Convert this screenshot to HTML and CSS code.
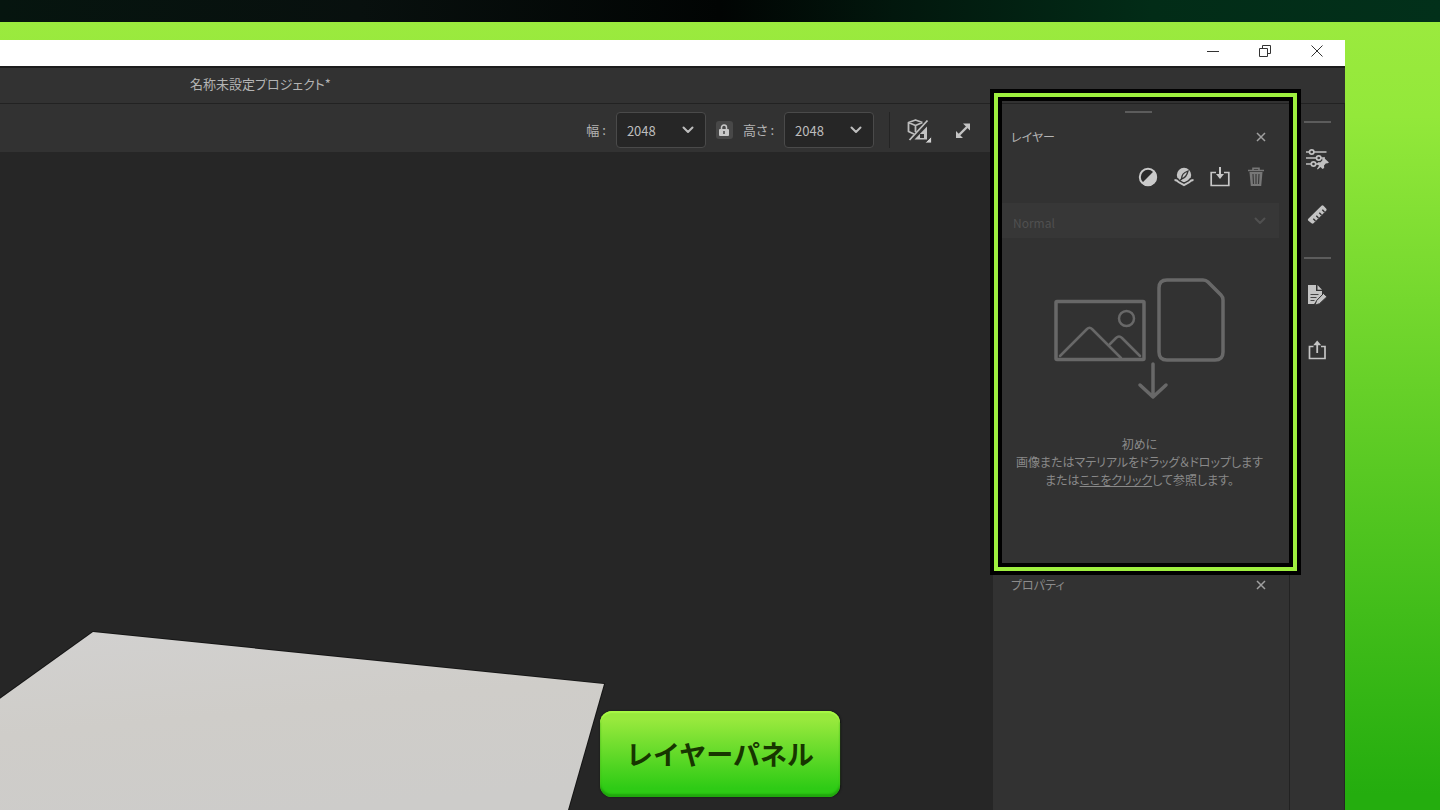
FILE: index.html
```html
<!DOCTYPE html>
<html lang="ja">
<head>
<meta charset="utf-8">
<meta name="viewport" content="width=device-width, initial-scale=1">
<title>レイヤーパネル</title>
<link rel="stylesheet" href="styles.css">
</head>
<body>
<div class="strip"></div>
<div class="stage">
  <div class="window">
    <header class="titlebar">
      <button class="win-btn" aria-label="最小化"><svg width="12" height="12" viewBox="0 0 12 12"><path d="M0 6.500h12"/></svg></button>
      <button class="win-btn" aria-label="元に戻す"><svg width="12" height="12" viewBox="0 0 12 12"><path d="M.5 3.500h8v8h-8zM3.500 3.500v-3h8v8h-3"/></svg></button>
      <button class="win-btn" aria-label="閉じる"><svg width="12" height="12" viewBox="0 0 12 12"><path d="M.5.5l11 11M11.500.5l-11 11"/></svg></button>
    </header>
    <div class="docbar"><span>名称未設定プロジェクト*</span></div>
    <div class="body">
      <main class="work">
        <div class="toolbar">
          <label class="dim-label" for="w">幅 :</label>
          <div class="select-box dim">
            <select id="w"><option>2048</option></select>
            <svg class="chev" width="12" height="8" viewBox="0 0 12 8"><path d="M1.500 1.500L6 6l4.500-4.500"/></svg>
          </div>
          <button class="lock" aria-label="縦横比をロック"><svg width="10" height="12" viewBox="0 0 10 12"><path d="M2.500 5.500V3.500a2.500 2.500 0 0 1 5 0v2" fill="none" stroke="#c8c8c8" stroke-width="1.500"/><rect y="5" width="10" height="7" rx="1" fill="#c8c8c8"/><path d="M5 7v3" stroke="#444" stroke-width="1.500"/></svg></button>
          <label class="dim-label" for="h">高さ :</label>
          <div class="select-box dim">
            <select id="h"><option>2048</option></select>
            <svg class="chev" width="12" height="8" viewBox="0 0 12 8"><path d="M1.500 1.500L6 6l4.500-4.500"/></svg>
          </div>
          <span class="divider"></span>
          <button class="tool" aria-label="3D/2D 表示">
            <svg width="26" height="26" viewBox="0 0 26 26">
              <g fill="none" stroke="#bcbcbc" stroke-width="1.800" stroke-linejoin="round"><path d="M8 17L2.500 14.500V5.500L9.500 3l7 2.500M2.500 5.500l7 3 7-3M9.500 8.500V15"/></g>
              <path d="M21.500 3.500L3.500 23" stroke="#c0c0c0" stroke-width="1.800"/>
              <path d="M21 9.500V22.500H8.500z" fill="#c0c0c0"/><path d="M14 17h4v4h-4z" fill="#333"/>
              <path d="M25.500 19.500v6.500H19z" fill="#d0d0d0" stroke="#333" stroke-width=".8"/>
            </svg>
          </button>
          <button class="tool" aria-label="全画面表示"><svg width="16" height="16" viewBox="0 0 16 16"><path d="M4 13l8-8" stroke="#c4c4c4" stroke-width="2.400"/><path d="M8 1.500h7v7zM1 9v7h7z" fill="#c4c4c4"/></svg></button>
        </div>
        <div class="viewport">
          <svg class="plane" width="640" height="200" viewBox="0 0 640 200" aria-hidden="true">
            <defs><linearGradient id="pl" x1="0" y1="0" x2=".3" y2="1"><stop offset="0" stop-color="#d2d1d0"/><stop offset=".5" stop-color="#cfcdc9"/><stop offset="1" stop-color="#cdccca"/></linearGradient></defs>
            <path d="M-10 96L93 22l511 52-40 140H-10z" fill="url(#pl)" stroke="#161616" stroke-width="2" paint-order="stroke"/>
          </svg>
        </div>
      </main>
      <aside class="panels">
        <section class="panel layers">
          <span class="grip"></span>
          <div class="panel-head">
            <h2>レイヤー</h2>
            <button class="close" aria-label="レイヤーを閉じる"><svg width="10" height="10" viewBox="0 0 10 10"><path d="M1 1l8 8M9 1L1 9"/></svg></button>
          </div>
          <div class="actions">
            <button class="tool" aria-label="調整を追加"><svg width="20" height="20" viewBox="0 0 20 20"><circle cx="10" cy="10" r="8.200" fill="#2c2c2c" stroke="#cacaca" stroke-width="2"/><path d="M16.200 3.800A8.700 8.700 0 0 1 3.800 16.200z" fill="#cacaca"/></svg></button>
            <button class="tool" aria-label="マテリアルを追加"><svg width="20" height="20" viewBox="0 0 20 20"><circle cx="10" cy="8" r="7.200" fill="#c4c4c4"/><path d="M7.500 12c0-4 2-6.500 6.500-8-1 4.500-3 7-6.500 8z" fill="#c4c4c4" stroke="#333" stroke-width="1.300"/><path d="M6 13.500l2-2" stroke="#333" stroke-width="1.300"/><path d="M.5 12q3 .5 4.500 3l5 3 5-3q1.500-2.500 4.500-3" fill="none" stroke="#333" stroke-width="4"/><path d="M.5 13q2.500 0 4 2l5.500 3.200L15.500 15q1.500-2 4-2" fill="none" stroke="#c4c4c4" stroke-width="2"/></svg></button>
            <button class="tool" aria-label="読み込み"><svg width="20" height="20" viewBox="0 0 20 20"><path d="M6 5.500H1.200v13h17.600v-13H14" fill="none" stroke="#c8c8c8" stroke-width="1.700"/><path d="M10 0v8" stroke="#c8c8c8" stroke-width="2"/><path d="M6 7h8l-4 5z" fill="#c8c8c8"/></svg></button>
            <button class="tool" aria-label="削除" disabled><svg width="20" height="20" viewBox="0 0 20 20"><path d="M2 3.500h16M7 3V1.200h6V3" fill="none" stroke="#777" stroke-width="1.600"/><path d="M3.500 5h13l-1.300 14H4.800z" fill="#777"/><path d="M7 7l.5 10M10 7v10M13 7l-.5 10" stroke="#3a3a3a" stroke-width="1.200"/></svg></button>
          </div>
          <div class="select-box blend">
            <select aria-label="描画モード" disabled><option>Normal</option></select>
            <svg class="chev" width="12" height="8" viewBox="0 0 12 8"><path d="M1.500 1.500L6 6l4.500-4.500"/></svg>
          </div>
          <div class="drop">
            <svg width="172" height="122" viewBox="0 0 172 122" fill="none" stroke="#686868" stroke-linecap="round" stroke-linejoin="round" aria-hidden="true">
              <rect x="2" y="23.500" width="88" height="58" rx="1" stroke-width="3.500"/>
              <g stroke-width="2.500"><path d="M6 78l27-27q2.500-2.500 5 0l29 29M56 66l6-6q3-3 6 0l18 18"/><circle cx="72.500" cy="40.500" r="7.500"/></g>
              <path d="M113 2h36q3 0 5 2l13 13q2 2 2 5v52q0 8-8 8h-48q-8 0-8-8V10q0-8 8-8z" stroke-width="3.500"/>
              <path d="M99 86v32M86 107l13 12 13-12" stroke-width="3.500"/>
            </svg>
            <p>初めに<br>画像またはマテリアルをドラッグ＆ドロップします<br>または<a href="#browse">ここをクリック</a>して参照します。</p>
          </div>
          <div class="frame"></div>
        </section>
        <section class="panel props">
          <div class="panel-head">
            <h2>プロパティ</h2>
            <button class="close" aria-label="プロパティを閉じる"><svg width="10" height="10" viewBox="0 0 10 10"><path d="M1 1l8 8M9 1L1 9"/></svg></button>
          </div>
        </section>
      </aside>
      <nav class="rail" aria-label="パネル">
        <div class="group">
          <button class="tool" aria-label="パラメーター"><svg width="24" height="24" viewBox="0 0 24 24"><g fill="none" stroke="#c0c0c0" stroke-width="1.700"><path d="M1 5h3.500M9 5h12.500M1 11h10M16 11h4M1 17h5M11 17h3"/><circle cx="6.700" cy="5" r="2.200"/><circle cx="13.700" cy="11" r="2.200"/><circle cx="8.500" cy="17" r="2.200"/></g><path d="M18.500 10.500l5.500 5-2 1-1-.2-2 2.300.2 2.400-1.700 1-2-2-2.800 2.500-.7-.7 2-3-2-2 1.200-1.600 2.400.1 1.800-2-.2-1.500z" fill="#c0c0c0"/></svg></button>
          <button class="tool" aria-label="定規"><svg width="24" height="24" viewBox="0 0 24 24"><path d="M3.300 15.700L16.500 2.800q1-1 2 0l2.800 3q.7 1 0 1.800L8.500 20.300q-1 .8-2 0L3.100 17.500q-.7-.9.200-1.800z" fill="#c4c4c4"/><path d="M10.500 18l-2.200-2.300M13.500 15l-2.200-2.300M16.500 12l-2.200-2.300M19.500 9l-2.200-2.300" stroke="#333" stroke-width="1.400"/></svg></button>
        </div>
        <div class="group">
          <button class="tool" aria-label="ドキュメント編集"><svg width="24" height="24" viewBox="0 0 24 24"><path d="M3 2h8v6h6v4l-8 9H3z" fill="#c4c4c4"/><path d="M12.500 2L17 6.700h-4.500z" fill="#c4c4c4"/><path d="M5.500 11.500h8M5.500 14.500h6M5.500 17.500h4" stroke="#444" stroke-width="1.200"/><path d="M18.500 10.500l3.500 3.200-7.500 7-4.500 1.500 1.500-4.500z" fill="#c4c4c4" stroke="#333" stroke-width="1"/></svg></button>
          <button class="tool" aria-label="書き出し"><svg width="24" height="24" viewBox="0 0 24 24"><path d="M8.500 7.500H4.500v12h15.500v-12h-4" fill="none" stroke="#c4c4c4" stroke-width="1.700"/><path d="M12.200 14V4" stroke="#c4c4c4" stroke-width="1.800"/><path d="M8.200 6.300h8l-4-4.800z" fill="#c4c4c4"/></svg></button>
        </div>
      </nav>
    </div>
  </div>
  <div class="caption">レイヤーパネル</div>
</div>
</body>
</html>
```
FILE: styles.css
```css
* { box-sizing: border-box; }
body {
  margin: 0;
  min-height: 100vh;
  display: flex;
  flex-direction: column;
  font-family: "Noto Sans CJK JP", sans-serif;
  font-size: 13px;
  font-feature-settings: "palt";
  color: #b4b4b4;
}
button { padding: 0; border: 0; background: none; display: grid; place-items: center; }
svg { display: block; }
h2, p { margin: 0; font-weight: 400; }

.strip {
  height: 22px;
  background: linear-gradient(90deg, #06150f 0%, #08100e 25%, #010403 50%, #02170d 62%, #022c17 80%, #02301a 100%);
}
.stage {
  position: relative;
  flex: 1;
  display: flex;
  padding: 18px 95px 0 0;
  background: linear-gradient(180deg, #9bea3e 0%, #93e83a 12%, #24ad0e 98%);
}
.window { flex: 1; display: flex; flex-direction: column; background: #323232; }

.titlebar {
  height: 26px;
  display: flex;
  justify-content: flex-end;
  align-items: flex-start;
  gap: 40px;
  padding: 5px 22px 0 0;
  background: #fff;
}
.win-btn { width: 12px; height: 12px; }
.win-btn svg { fill: none; stroke: #333; stroke-width: 1; }

.docbar {
  height: 38px;
  display: flex;
  align-items: center;
  padding: 0 0 4px 190px;
  border-top: 2px solid #1c1c1c;
  border-bottom: 1px solid #222;
}
.body { flex: 1; display: flex; }
.work { flex: 1; display: flex; flex-direction: column; }

.toolbar {
  height: 48px;
  display: flex;
  align-items: center;
  justify-content: flex-end;
  gap: 10px;
  padding: 3px 22px 0 0;
}
.select-box { display: grid; align-items: center; }
.select-box select, .chev { grid-area: 1 / 1; }
.select-box select {
  appearance: none;
  width: 100%;
  height: 36px;
  padding: 0 10px;
  border: 0;
  font: inherit;
  color: inherit;
  background: none;
  opacity: 1;
}
.chev { justify-self: end; pointer-events: none; fill: none; stroke: currentColor; stroke-width: 2; stroke-linecap: round; stroke-linejoin: round; }
.dim { width: 90px; color: #bdbdbd; }
.dim select { background: #262626; border: 1px solid #4a4a4a; border-radius: 4px; padding-top: 2px; }
.dim .chev { margin-right: 12px; }
.lock { width: 17px; height: 18px; border-radius: 3px; background: #484848; }
.divider { width: 1px; height: 36px; margin: 0 6px 0 5px; background: #242424; }
.toolbar .tool + .tool { margin-left: 13px; }

.viewport { flex: 1; display: flex; align-items: flex-end; background: #262626; }

.panels { width: 297px; display: flex; flex-direction: column; }
.panel { padding: 0 24px 0 18px; }
.layers {
  position: relative;
  display: flex;
  flex-direction: column;
  padding-top: 7px;
  padding-bottom: 79px;
}
.grip { width: 27px; height: 2px; align-self: center; background: #5c5c5c; }
.panel-head { display: flex; justify-content: space-between; align-items: center; height: 24px; }
.layers .panel-head { margin-top: 12px; }
.panel-head h2 { font-size: 12px; line-height: 24px; }
.close { width: 10px; height: 10px; }
.close svg { fill: none; stroke: #a0a0a0; stroke-width: 1.500; }
.actions { display: flex; justify-content: flex-end; gap: 16px; margin: 18px 0 0; }
.blend { margin: 16px -13px 0 -10px; background: #373737; color: #505050; font-size: 12px; }
.blend select { height: 35px; padding: 4px 12px 0; }
.blend .chev { margin-right: 13px; }
.drop { display: flex; flex-direction: column; align-items: center; gap: 35px; margin: 40px -14px 0 -12px; color: #898989; }
.drop p { font-size: 12px; line-height: 18px; text-align: center; white-space: nowrap; }
.drop a { color: inherit; }
.frame {
  position: absolute;
  top: -11px;
  right: -7px;
  bottom: -3px;
  left: 1px;
  border: 4px solid #9ff03f;
  box-shadow: 0 0 0 4px #000, inset 0 0 0 4px #000;
  pointer-events: none;
}
.props { flex: 1; padding-top: 5px; padding-right: 23px; border-right: 1px solid #222; color: #8c8c8c; }

.rail { width: 55px; display: flex; flex-direction: column; align-items: center; gap: 30px; padding-top: 17px; border-right: 1px solid #252525; }
.group { width: 27px; display: grid; justify-items: center; gap: 32px; padding-top: 24px; border-top: 2px solid #5c5c5c; }

.caption {
  position: absolute;
  left: 50%;
  bottom: 13px;
  transform: translateX(-50%);
  padding: 23px 26px;
  border-radius: 12px;
  background: linear-gradient(180deg, #98e93d 10%, #2ecb15 90%);
  box-shadow: inset 0 2px 1px #a8f845, inset 0 -3px 2px #20a60d, 0 0 2px #101510;
  color: #173600;
  font-size: 27px;
  line-height: 40px;
  font-weight: 700;
  font-feature-settings: normal;
  white-space: nowrap;
}
```
